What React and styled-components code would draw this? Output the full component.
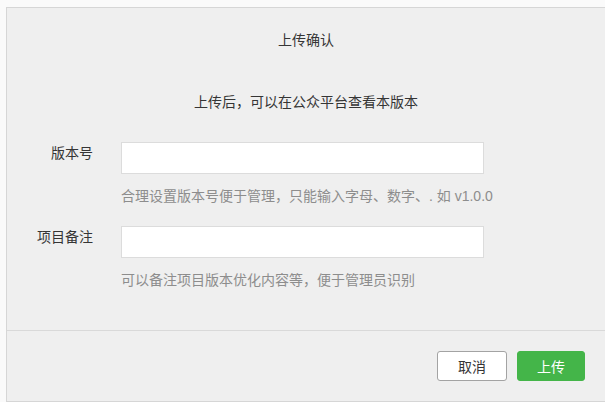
import React from "react";
import styled, { createGlobalStyle } from "styled-components";

const Global = createGlobalStyle`
  html, body {
    margin: 0;
    padding: 0;
    background: #fafafa;
    overflow: hidden;
  }
  body {
    font-family: "Liberation Sans", "Noto Sans CJK SC", sans-serif;
    font-size: 14px;
    color: #353535;
  }
  * { box-sizing: border-box; }
`;

const Page = styled.div`
  padding: 7px 0 0 6px;
`;

const Dialog = styled.div`
  width: 600px;
  background: #efefef;
  border: 1px solid #d6d6d6;
`;

const Body = styled.div`
  padding: 21px 0 39px;
`;

const Title = styled.div`
  text-align: center;
  line-height: 22px;
  color: #353535;
`;

const Subtitle = styled.div`
  margin-top: 40px;
  text-align: center;
  line-height: 22px;
  color: #353535;
`;

const Form = styled.div`
  margin-top: 29px;
  display: flex;
  flex-direction: column;
  gap: 19px;
`;

const Row = styled.div`
  display: grid;
  grid-template-columns: 86px 363px;
  column-gap: 28px;
  align-items: start;
`;

const Label = styled.label`
  text-align: right;
  line-height: 22px;
  color: #353535;
`;

const Field = styled.div`
  display: flex;
  flex-direction: column;
  gap: 11px;
`;

const Input = styled.input`
  width: 363px;
  height: 32px;
  border: 1px solid #dcdcdc;
  background: #fff;
  outline: none;
  padding: 0 8px;
  font: inherit;
`;

const Hint = styled.div`
  line-height: 22px;
  color: #8d8d8d;
  white-space: nowrap;
`;

const Footer = styled.div`
  border-top: 1px solid #d9d9d9;
  padding: 20px 20px 20px 0;
  display: flex;
  justify-content: flex-end;
  gap: 10px;
`;

const Button = styled.button`
  width: ${(p) => (p.$primary ? "68px" : "70px")};
  height: 30px;
  border-radius: 3px;
  font-family: inherit;
  font-size: 14px;
  padding: 0;
  cursor: pointer;
  border: 1px solid ${(p) => (p.$primary ? "#44b549" : "#a3a3a3")};
  background: ${(p) => (p.$primary ? "#44b549" : "#fff")};
  color: ${(p) => (p.$primary ? "#fff" : "#353535")};
`;

export default function App() {
  return (
    <>
      <Global />
      <Page>
        <Dialog>
          <Body>
            <Title>上传确认</Title>
            <Subtitle>上传后，可以在公众平台查看本版本</Subtitle>
            <Form>
              <Row>
                <Label>版本号</Label>
                <Field>
                  <Input />
                  <Hint>合理设置版本号便于管理，只能输入字母、数字、. 如 v1.0.0</Hint>
                </Field>
              </Row>
              <Row>
                <Label>项目备注</Label>
                <Field>
                  <Input />
                  <Hint>可以备注项目版本优化内容等，便于管理员识别</Hint>
                </Field>
              </Row>
            </Form>
          </Body>
          <Footer>
            <Button>取消</Button>
            <Button $primary>上传</Button>
          </Footer>
        </Dialog>
      </Page>
    </>
  );
}
